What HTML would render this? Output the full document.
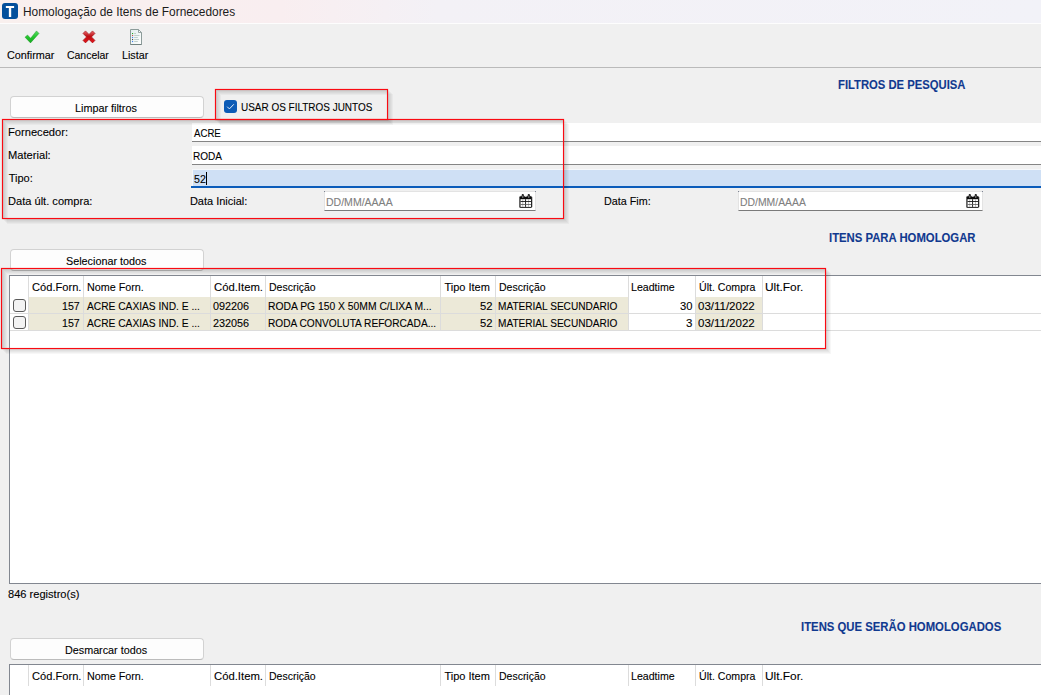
<!DOCTYPE html>
<html>
<head>
<meta charset="utf-8">
<title>Homologação de Itens de Fornecedores</title>
<style>
html,body{margin:0;padding:0;}
body{width:1041px;height:695px;overflow:hidden;background:#f0f0f0;position:relative;font-family:"Liberation Sans",sans-serif;font-size:11px;color:#000;}
.abs{position:absolute;}
.t{position:absolute;white-space:nowrap;transform-origin:0 0;color:#000;-webkit-text-stroke:0.1px currentColor;}
#titlebar{left:0;top:0;width:1041px;height:23px;background:linear-gradient(to right,#f9f0ee 0,#f9eef0 27%,#f3f1f6 42%,#f2f2f8 100%);border-bottom:1px solid #fdfdfd;}
#logo{left:2px;top:3px;width:16px;height:16px;background:#04509c;border-radius:3px;}
.btn{position:absolute;background:#fdfdfd;border:1px solid #d2d2d2;border-bottom-color:#bcbcbc;border-radius:4px;box-sizing:border-box;}
.inp{position:absolute;background:#fff;box-sizing:border-box;}
.red{position:absolute;border:1px solid #fa0a12;box-sizing:border-box;box-shadow:0 0 1px rgba(255,0,0,.55),inset 0 0 1px rgba(255,0,0,.55),1px 1px 0 rgba(0,0,0,.032),inset 1px 1px 0 rgba(0,0,0,.032),2px 2px 0 rgba(0,0,0,.032),inset 2px 2px 0 rgba(0,0,0,.032),3px 3px 0 rgba(0,0,0,.032),inset 3px 3px 0 rgba(0,0,0,.032),4px 4px 0 rgba(0,0,0,.032),inset 4px 4px 0 rgba(0,0,0,.032),5px 5px 0 rgba(0,0,0,.032),inset 5px 5px 0 rgba(0,0,0,.032);}
.grid{position:absolute;background:#fff;border:1px solid #828790;box-sizing:border-box;}
.bg{position:absolute;background:#ece9d8;}
.vl{position:absolute;width:1px;background:#dcdcdc;}
.hl{position:absolute;height:1px;background:#dcdcdc;}
.cb{position:absolute;width:13px;height:13px;box-sizing:border-box;border:1px solid #5a5a5a;border-radius:3px;background:#f3f3f3;}
</style>
</head>
<body>
<!-- title bar -->
<div class="abs" id="titlebar"></div>
<div class="abs" id="logo"><svg width="16" height="16" viewBox="0 0 16 16"><path d="M3.85 3h8.25v1.9H9.2v9H6.86v-9H3.85z" fill="#fff"/></svg></div>

<!-- toolbar icons -->
<svg class="abs" style="left:22px;top:28px" width="20" height="18" viewBox="22 28 20 18"><defs><linearGradient id="gg" x1="0" y1="0" x2="0" y2="1"><stop offset="0" stop-color="#55dc60"/><stop offset="0.55" stop-color="#22c42c"/><stop offset="1" stop-color="#17a821"/></linearGradient></defs><path d="M25 37.2 L27.5 35 L30.6 38.3 L36.5 30.9 L39 33.4 L30.5 42.9Z" fill="url(#gg)" stroke="#1a9423" stroke-width="0.45" stroke-linejoin="round"/></svg>
<svg class="abs" style="left:81px;top:29px" width="16" height="16" viewBox="-2 -2 16 16"><defs><linearGradient id="rg" x1="0" y1="0" x2="0" y2="1"><stop offset="0" stop-color="#ea6a6f"/><stop offset="0.45" stop-color="#bd0f14"/><stop offset="1" stop-color="#e5141a"/></linearGradient></defs><path d="M0 2.5 L2.5 0 L6 3.5 L9.5 0 L12 2.5 L8.5 6 L12 9.5 L9.5 12 L6 8.5 L2.5 12 L0 9.5 L3.5 6Z" transform="translate(0,-0.1)" fill="url(#rg)" stroke="#9c0c10" stroke-width="0.6" stroke-linejoin="round"/></svg>
<svg class="abs" style="left:130px;top:29px" width="12" height="16" viewBox="0 0 12 16"><defs><linearGradient id="dg" x1="0" y1="0" x2="1" y2="1"><stop offset="0" stop-color="#e2efed"/><stop offset="1" stop-color="#ffffff"/></linearGradient></defs><path d="M0.5 0.5h8l3 3v12h-11z" fill="url(#dg)" stroke="#8c9c9a" stroke-width="1"/><path d="M0.5 15.5h11" stroke="#71817f" stroke-width="1"/><path d="M8.5 0.5v3h3z" fill="#fff" stroke="#8c9c9a" stroke-width="0.9"/><rect x="2" y="4" width="1.1" height="1.1" fill="#22a822"/><rect x="2" y="6" width="1.1" height="1.1" fill="#c6474a"/><rect x="2" y="8" width="1.1" height="1.1" fill="#3f7cf0"/><rect x="2" y="10" width="1.1" height="1.1" fill="#4a4a4a"/><rect x="2" y="12" width="1.1" height="1.1" fill="#3f7cf0"/><path d="M4.2 4.5h1.8M4.2 6.5h5.3M4.2 8.5h3.6M4.2 10.5h4.8M4.2 12.5h3.6" stroke="#b9c9c6" stroke-width="0.9"/></svg>
<div class="abs" style="left:0;top:67px;width:1041px;height:1px;background:#bababa"></div>

<!-- buttons -->
<div class="btn" style="left:10px;top:96px;width:194px;height:22px"></div>
<div class="btn" style="left:10px;top:249px;width:194px;height:22px"></div>
<div class="btn" style="left:10px;top:638px;width:194px;height:22px"></div>

<!-- checkbox -->
<div class="abs" style="left:224px;top:100px;width:13px;height:13px;background:#0c5bb6;border-radius:3px"><svg width="13" height="13" viewBox="0 0 13 13"><path d="M3.2 6.7 L5.4 8.9 L9.8 4.3" fill="none" stroke="#e6effa" stroke-width="1"/></svg></div>

<!-- filter inputs -->
<div class="inp" style="left:192px;top:123px;width:849px;height:19px;border-bottom:1px solid #858585"></div>
<div class="inp" style="left:192px;top:146px;width:849px;height:19px;border-bottom:1px solid #858585"></div>
<div class="inp" style="left:192px;top:169px;width:849px;height:19px;background:#cfe0f5;border-top:1px solid #f6f8fb;border-left:1px solid #f6f8fb;border-bottom:2px solid #0b5cba"></div>
<div class="abs" style="left:206px;top:172px;width:1px;height:13px;background:#000"></div>
<div class="abs" style="left:191px;top:186px;width:850px;height:2px;background:#0b5cba"></div>

<!-- date inputs -->
<div class="inp" style="left:324px;top:191px;width:212px;height:20px;border:1px solid #e3e3e3;border-bottom-color:#7a7a7a"></div>
<div class="inp" style="left:738px;top:191px;width:245px;height:20px;border:1px solid #e3e3e3;border-bottom-color:#7a7a7a"></div>
<svg class="abs" style="left:519px;top:194px" width="14" height="14" viewBox="0 0 14 14"><rect x="0.2" y="2" width="13" height="12" rx="1.6" fill="#0a0a0a" stroke="#bdbdbd" stroke-width="0.5"/><rect x="1.5" y="5.2" width="10.5" height="7.7" fill="#fff"/><rect x="6.15" y="5.2" width="0.9" height="7.7" fill="#111"/><rect x="3.45" y="5.2" width="0.7" height="7.7" fill="#a2a2a2"/><rect x="9.15" y="5.2" width="0.7" height="7.7" fill="#a2a2a2"/><rect x="1.5" y="7.1" width="10.5" height="0.9" fill="#1a1a1a"/><rect x="1.5" y="10" width="10.5" height="0.8" fill="#5a5a5a"/><path d="M5.4 2 Q6.7 3.6 8.2 2z" fill="#fff"/><rect x="2.7" y="0" width="2.2" height="3.7" rx="1" fill="#1c1c1c"/><rect x="8.7" y="0" width="2.2" height="3.7" rx="1" fill="#1c1c1c"/><rect x="3.3" y="1.6" width="1" height="2.4" rx="0.5" fill="#8a8a8a"/><rect x="9.3" y="1.6" width="1" height="2.4" rx="0.5" fill="#8a8a8a"/></svg>
<svg class="abs" style="left:966px;top:194px" width="14" height="14" viewBox="0 0 14 14"><rect x="0.2" y="2" width="13" height="12" rx="1.6" fill="#0a0a0a" stroke="#bdbdbd" stroke-width="0.5"/><rect x="1.5" y="5.2" width="10.5" height="7.7" fill="#fff"/><rect x="6.15" y="5.2" width="0.9" height="7.7" fill="#111"/><rect x="3.45" y="5.2" width="0.7" height="7.7" fill="#a2a2a2"/><rect x="9.15" y="5.2" width="0.7" height="7.7" fill="#a2a2a2"/><rect x="1.5" y="7.1" width="10.5" height="0.9" fill="#1a1a1a"/><rect x="1.5" y="10" width="10.5" height="0.8" fill="#5a5a5a"/><path d="M5.4 2 Q6.7 3.6 8.2 2z" fill="#fff"/><rect x="2.7" y="0" width="2.2" height="3.7" rx="1" fill="#1c1c1c"/><rect x="8.7" y="0" width="2.2" height="3.7" rx="1" fill="#1c1c1c"/><rect x="3.3" y="1.6" width="1" height="2.4" rx="0.5" fill="#8a8a8a"/><rect x="9.3" y="1.6" width="1" height="2.4" rx="0.5" fill="#8a8a8a"/></svg>


<div class="abs" style="left:324px;top:191px;width:1px;height:1px;background:#7d8494"></div>
<div class="abs" style="left:535px;top:191px;width:1px;height:1px;background:#7d8494"></div>
<div class="abs" style="left:738px;top:191px;width:1px;height:1px;background:#7d8494"></div>
<div class="abs" style="left:982px;top:191px;width:1px;height:1px;background:#7d8494"></div>
<!-- grid 1 -->
<div class="grid" style="left:9px;top:275px;width:1040px;height:309px"></div>
<div class="bg" style="left:29px;top:297px;width:599px;height:16px"></div>
<div class="bg" style="left:29px;top:314px;width:599px;height:16px"></div>
<div class="bg" style="left:696px;top:297px;width:66px;height:16px"></div>
<div class="bg" style="left:696px;top:314px;width:66px;height:16px"></div>
<div class="hl" style="left:10px;top:313px;width:1031px"></div>
<div class="hl" style="left:10px;top:330px;width:1031px"></div>
<div class="vl" style="left:28px;top:276px;height:55px"></div>
<div class="vl" style="left:83px;top:276px;height:55px"></div>
<div class="vl" style="left:210px;top:276px;height:55px"></div>
<div class="vl" style="left:265px;top:276px;height:55px"></div>
<div class="vl" style="left:440px;top:276px;height:55px"></div>
<div class="vl" style="left:495px;top:276px;height:55px"></div>
<div class="vl" style="left:628px;top:276px;height:55px"></div>
<div class="vl" style="left:695px;top:276px;height:55px"></div>
<div class="vl" style="left:762px;top:276px;height:55px"></div>
<div class="cb" style="left:13px;top:299px"></div>
<div class="cb" style="left:13px;top:316px"></div>

<!-- grid 2 -->
<div class="grid" style="left:9px;top:664px;width:1040px;height:60px"></div>
<div class="vl" style="left:28px;top:665px;height:21px"></div>
<div class="vl" style="left:83px;top:665px;height:21px"></div>
<div class="vl" style="left:210px;top:665px;height:21px"></div>
<div class="vl" style="left:265px;top:665px;height:21px"></div>
<div class="vl" style="left:440px;top:665px;height:21px"></div>
<div class="vl" style="left:495px;top:665px;height:21px"></div>
<div class="vl" style="left:628px;top:665px;height:21px"></div>
<div class="vl" style="left:695px;top:665px;height:21px"></div>
<div class="vl" style="left:762px;top:665px;height:21px"></div>

<div class="t" style="left:22.71px;top:4.84px;font-size:12px;line-height:14px;height:14px;transform:scaleX(0.9908);color:#1b1b1b;-webkit-text-stroke:0;">Homologação de Itens de Fornecedores</div>
<div class="t" style="left:6.81px;top:48.69px;font-size:11px;line-height:13px;height:13px;transform:scaleX(0.9832);">Confirmar</div>
<div class="t" style="left:66.98px;top:48.69px;font-size:11px;line-height:13px;height:13px;transform:scaleX(0.9503);">Cancelar</div>
<div class="t" style="left:121.57px;top:48.69px;font-size:11px;line-height:13px;height:13px;transform:scaleX(0.9739);">Listar</div>
<div class="t" style="left:837.76px;top:77.84px;font-size:12px;line-height:14px;height:14px;transform:scaleX(0.9388);font-weight:bold;color:#10398f;">FILTROS DE PESQUISA</div>
<div class="t" style="left:828.63px;top:230.84px;font-size:12px;line-height:14px;height:14px;transform:scaleX(0.9431);font-weight:bold;color:#10398f;">ITENS PARA HOMOLOGAR</div>
<div class="t" style="left:801.29px;top:619.84px;font-size:12px;line-height:14px;height:14px;transform:scaleX(0.9442);font-weight:bold;color:#10398f;">ITENS QUE SERÃO HOMOLOGADOS</div>
<div class="t" style="left:74.52px;top:101.69px;font-size:11px;line-height:13px;height:13px;transform:scaleX(0.9828);">Limpar filtros</div>
<div class="t" style="left:65.94px;top:254.69px;font-size:11px;line-height:13px;height:13px;transform:scaleX(0.9815);">Selecionar todos</div>
<div class="t" style="left:64.81px;top:643.69px;font-size:11px;line-height:13px;height:13px;transform:scaleX(0.9794);">Desmarcar todos</div>
<div class="t" style="left:241.25px;top:100.69px;font-size:11px;line-height:13px;height:13px;transform:scaleX(0.9056);">USAR OS FILTROS JUNTOS</div>
<div class="t" style="left:7.89px;top:125.69px;font-size:11px;line-height:13px;height:13px;transform:scaleX(1.0122);">Fornecedor:</div>
<div class="t" style="left:7.89px;top:148.69px;font-size:11px;line-height:13px;height:13px;transform:scaleX(1.0123);">Material:</div>
<div class="t" style="left:8.75px;top:171.69px;font-size:11px;line-height:13px;height:13px;">Tipo:</div>
<div class="t" style="left:7.85px;top:194.69px;font-size:11px;line-height:13px;height:13px;transform:scaleX(1.0078);">Data últ. compra:</div>
<div class="t" style="left:189.90px;top:194.69px;font-size:11px;line-height:13px;height:13px;">Data Inicial:</div>
<div class="t" style="left:603.77px;top:194.69px;font-size:11px;line-height:13px;height:13px;transform:scaleX(0.9783);">Data Fim:</div>
<div class="t" style="left:194.00px;top:126.69px;font-size:11px;line-height:13px;height:13px;transform:scaleX(0.8760);">ACRE</div>
<div class="t" style="left:192.97px;top:149.69px;font-size:11px;line-height:13px;height:13px;transform:scaleX(0.9129);">RODA</div>
<div class="t" style="left:193.70px;top:172.69px;font-size:11px;line-height:13px;height:13px;transform:scaleX(0.9618);">52</div>
<div class="t" style="left:325.53px;top:195.69px;font-size:11px;line-height:13px;height:13px;transform:scaleX(0.9565);color:#808080;">DD/MM/AAAA</div>
<div class="t" style="left:740.04px;top:195.69px;font-size:11px;line-height:13px;height:13px;transform:scaleX(0.9457);color:#808080;">DD/MM/AAAA</div>
<div class="t" style="left:8.25px;top:587.69px;font-size:11px;line-height:13px;height:13px;transform:scaleX(1.0072);">846 registro(s)</div>
<div class="t" style="left:32.10px;top:280.69px;font-size:11px;line-height:13px;height:13px;transform:scaleX(1.0104);">Cód.Forn.</div>
<div class="t" style="left:86.81px;top:280.69px;font-size:11px;line-height:13px;height:13px;transform:scaleX(0.9774);">Nome Forn.</div>
<div class="t" style="left:213.99px;top:280.69px;font-size:11px;line-height:13px;height:13px;transform:scaleX(1.0266);">Cód.Item.</div>
<div class="t" style="left:268.62px;top:280.69px;font-size:11px;line-height:13px;height:13px;transform:scaleX(0.9537);">Descrição</div>
<div class="t" style="left:444.45px;top:280.69px;font-size:11px;line-height:13px;height:13px;">Tipo Item</div>
<div class="t" style="left:498.59px;top:280.69px;font-size:11px;line-height:13px;height:13px;transform:scaleX(0.9529);">Descrição</div>
<div class="t" style="left:631.43px;top:280.69px;font-size:11px;line-height:13px;height:13px;transform:scaleX(0.9636);">Leadtime</div>
<div class="t" style="left:698.58px;top:280.69px;font-size:11px;line-height:13px;height:13px;transform:scaleX(0.9624);">Últ. Compra</div>
<div class="t" style="left:765.04px;top:280.69px;font-size:11px;line-height:13px;height:13px;transform:scaleX(1.0815);">Ult.For.</div>
<div class="t" style="left:32.10px;top:669.69px;font-size:11px;line-height:13px;height:13px;transform:scaleX(1.0104);">Cód.Forn.</div>
<div class="t" style="left:86.81px;top:669.69px;font-size:11px;line-height:13px;height:13px;transform:scaleX(0.9774);">Nome Forn.</div>
<div class="t" style="left:213.99px;top:669.69px;font-size:11px;line-height:13px;height:13px;transform:scaleX(1.0266);">Cód.Item.</div>
<div class="t" style="left:268.62px;top:669.69px;font-size:11px;line-height:13px;height:13px;transform:scaleX(0.9537);">Descrição</div>
<div class="t" style="left:444.45px;top:669.69px;font-size:11px;line-height:13px;height:13px;">Tipo Item</div>
<div class="t" style="left:498.59px;top:669.69px;font-size:11px;line-height:13px;height:13px;transform:scaleX(0.9529);">Descrição</div>
<div class="t" style="left:631.43px;top:669.69px;font-size:11px;line-height:13px;height:13px;transform:scaleX(0.9636);">Leadtime</div>
<div class="t" style="left:698.58px;top:669.69px;font-size:11px;line-height:13px;height:13px;transform:scaleX(0.9624);">Últ. Compra</div>
<div class="t" style="left:765.04px;top:669.69px;font-size:11px;line-height:13px;height:13px;transform:scaleX(1.0815);">Ult.For.</div>
<div class="t" style="left:62.21px;top:299.69px;font-size:11px;line-height:13px;height:13px;transform:scaleX(0.9648);">157</div>
<div class="t" style="left:87.00px;top:299.69px;font-size:11px;line-height:13px;height:13px;transform:scaleX(0.9284);">ACRE CAXIAS IND. E ...</div>
<div class="t" style="left:213.08px;top:299.69px;font-size:11px;line-height:13px;height:13px;transform:scaleX(0.9822);">092206</div>
<div class="t" style="left:267.75px;top:299.69px;font-size:11px;line-height:13px;height:13px;transform:scaleX(0.9391);">RODA PG 150 X 50MM C/LIXA M...</div>
<div class="t" style="left:479.98px;top:299.69px;font-size:11px;line-height:13px;height:13px;transform:scaleX(1.0206);">52</div>
<div class="t" style="left:497.86px;top:299.69px;font-size:11px;line-height:13px;height:13px;transform:scaleX(0.9174);">MATERIAL SECUNDARIO</div>
<div class="t" style="left:679.69px;top:299.69px;font-size:11px;line-height:13px;height:13px;transform:scaleX(1.0174);">30</div>
<div class="t" style="left:698.03px;top:299.69px;font-size:11px;line-height:13px;height:13px;transform:scaleX(1.0449);">03/11/2022</div>
<div class="t" style="left:62.21px;top:316.69px;font-size:11px;line-height:13px;height:13px;transform:scaleX(0.9648);">157</div>
<div class="t" style="left:87.00px;top:316.69px;font-size:11px;line-height:13px;height:13px;transform:scaleX(0.9284);">ACRE CAXIAS IND. E ...</div>
<div class="t" style="left:213.31px;top:316.69px;font-size:11px;line-height:13px;height:13px;transform:scaleX(0.9846);">232056</div>
<div class="t" style="left:267.65px;top:316.69px;font-size:11px;line-height:13px;height:13px;transform:scaleX(0.9211);">RODA CONVOLUTA REFORCADA...</div>
<div class="t" style="left:479.98px;top:316.69px;font-size:11px;line-height:13px;height:13px;transform:scaleX(1.0206);">52</div>
<div class="t" style="left:497.86px;top:316.69px;font-size:11px;line-height:13px;height:13px;transform:scaleX(0.9174);">MATERIAL SECUNDARIO</div>
<div class="t" style="left:685.83px;top:316.69px;font-size:11px;line-height:13px;height:13px;transform:scaleX(1.0476);">3</div>
<div class="t" style="left:698.03px;top:316.69px;font-size:11px;line-height:13px;height:13px;transform:scaleX(1.0449);">03/11/2022</div>

<!-- red annotations -->
<div class="red" style="left:215px;top:89px;width:173px;height:31px"></div>
<div class="red" style="left:2px;top:119px;width:562px;height:100px"></div>
<div class="red" style="left:1px;top:268px;width:825px;height:81px"></div>
</body>
</html>
